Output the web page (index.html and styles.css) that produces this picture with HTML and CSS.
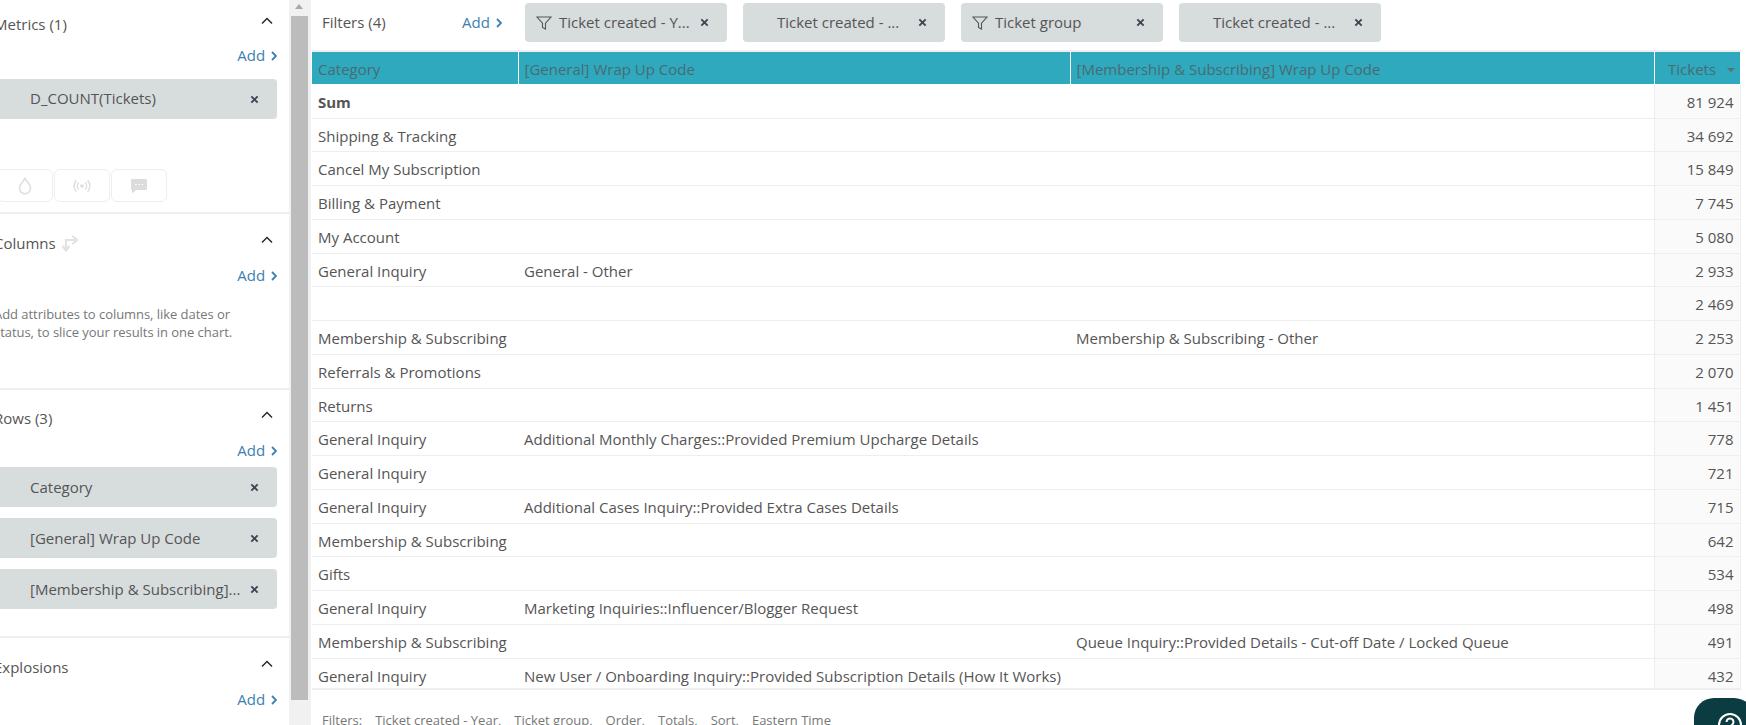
FILE: index.html
```html
<!DOCTYPE html>
<html lang="en">
<head>
    <meta charset="UTF-8">
    <title>Ticket report</title>
    <link rel="stylesheet" href="styles.css">
</head>
<body>
    <svg class="defs" width="0" height="0">
        <symbol id="x" viewBox="0 0 10 10"><path d="M1.5 1.5l7 7M8.5 1.5l-7 7" fill="none" stroke="currentColor" stroke-width="2.1"/></symbol>
        <symbol id="up" viewBox="0 0 12 8"><path d="M1 6.5L6 1.5l5 5" fill="none" stroke="currentColor" stroke-width="1.4"/></symbol>
        <symbol id="next" viewBox="0 0 6 10"><path d="M1 1l4 4-4 4" fill="none" stroke="currentColor" stroke-width="1.8"/></symbol>
        <symbol id="funnel" viewBox="0 0 16 16"><path d="M1 2h14l-5.5 6.2V14l-3-1.6V8.200z" fill="none" stroke="currentColor" stroke-width="1.1"/></symbol>
    </svg>

    <div class="sidebar">
        <div class="sidebar-inner">
            <section class="panel panel-metrics">
                <div class="panel-head"><span>Metrics (1)</span><svg class="chevron"><use href="#up"/></svg></div>
                <a class="add">Add <svg class="next"><use href="#next"/></svg></a>
                <div class="chip-list">
                    <div class="chip"><span class="chip-text">D_COUNT(Tickets)</span><svg class="close"><use href="#x"/></svg></div>
                </div>
                <div class="tool-row">
                    <div class="tool"></div>
                    <div class="tool">
                        <svg width="16" height="18" viewBox="0 0 16 18"><path d="M8 1.500C10 5 13.500 7.500 13.500 11.200A5.500 5.500 0 0 1 2.500 11.200C2.500 7.500 6 5 8 1.500z" fill="none" stroke="#e0e0e0" stroke-width="1.600"/></svg>
                    </div>
                    <div class="tool">
                        <svg width="18" height="14" viewBox="0 0 18 14" fill="none" stroke="#dcdcdc" stroke-width="1.300"><circle cx="9" cy="7" r="1.800" fill="#dcdcdc" stroke="none"/><path d="M5.800 3.500a5 5 0 0 0 0 7M12.200 3.500a5 5 0 0 1 0 7M3.400 1.200a8.500 8.500 0 0 0 0 11.600M14.600 1.200a8.500 8.500 0 0 1 0 11.600"/></svg>
                    </div>
                    <div class="tool">
                        <svg width="18" height="16" viewBox="0 0 18 16"><path d="M2 1h14a1 1 0 0 1 1 1v9a1 1 0 0 1-1 1H6l-4 3.500V12a1 1 0 0 1-1-1V2a1 1 0 0 1 1-1z" fill="#dcdcdc"/><path d="M5 6.500h1.500M8.300 6.500h1.500M11.600 6.500h1.500" stroke="#fff" stroke-width="1.200"/></svg>
                    </div>
                </div>
            </section>

            <section class="panel panel-columns">
                <div class="panel-head">
                    <span class="title-swap">Columns
                        <svg width="18" height="18" viewBox="0 0 18 18" fill="none" stroke="#e2e2e2" stroke-width="2.200"><path d="M5 15V6h10"/><path d="M11.500 2l4.500 4-4.500 4M1.500 12L5 16.500 8.500 12"/></svg>
                    </span>
                    <svg class="chevron"><use href="#up"/></svg>
                </div>
                <a class="add">Add <svg class="next"><use href="#next"/></svg></a>
                <p class="hint">Add attributes to columns, like dates or status, to slice your results in one chart.</p>
            </section>

            <section class="panel panel-rows">
                <div class="panel-head"><span>Rows (3)</span><svg class="chevron"><use href="#up"/></svg></div>
                <a class="add">Add <svg class="next"><use href="#next"/></svg></a>
                <div class="chip-list">
                    <div class="chip"><span class="chip-text">Category</span><svg class="close"><use href="#x"/></svg></div>
                    <div class="chip"><span class="chip-text">[General] Wrap Up Code</span><svg class="close"><use href="#x"/></svg></div>
                    <div class="chip"><span class="chip-text">[Membership &amp; Subscribing]...</span><svg class="close"><use href="#x"/></svg></div>
                </div>
            </section>

            <section class="panel panel-explosions">
                <div class="panel-head"><span>Explosions</span><svg class="chevron"><use href="#up"/></svg></div>
                <a class="add">Add <svg class="next"><use href="#next"/></svg></a>
            </section>
        </div>
    </div>

    <div class="scrollbar">
        <div class="scroll-arrow"></div>
        <div class="scroll-thumb"></div>
    </div>

    <div class="main">
        <div class="filter-bar">
            <div class="filter-label">Filters (4)</div>
            <a class="add filter-add">Add <svg class="next"><use href="#next"/></svg></a>
            <div class="filter-chip"><svg class="funnel"><use href="#funnel"/></svg><span class="filter-text">Ticket created - Y...</span><svg class="close"><use href="#x"/></svg></div>
            <div class="filter-chip"><span class="funnel"></span><span class="filter-text">Ticket created - ...</span><svg class="close"><use href="#x"/></svg></div>
            <div class="filter-chip"><svg class="funnel"><use href="#funnel"/></svg><span class="filter-text">Ticket group</span><svg class="close"><use href="#x"/></svg></div>
            <div class="filter-chip"><span class="funnel"></span><span class="filter-text">Ticket created - ...</span><svg class="close"><use href="#x"/></svg></div>
        </div>

        <div class="table-wrap">
            <table class="report">
                <colgroup><col class="col-cat"><col class="col-general"><col class="col-member"><col class="col-tickets"></colgroup>
                <thead>
                    <tr><th>Category</th><th>[General] Wrap Up Code</th><th>[Membership &amp; Subscribing] Wrap Up Code</th><th class="num">Tickets <span class="sort-caret"></span></th></tr>
                </thead>
                <tbody>
                    <tr class="sum"><td>Sum</td><td></td><td></td><td class="num">81 924</td></tr>
                    <tr><td>Shipping &amp; Tracking</td><td></td><td></td><td class="num">34 692</td></tr>
                    <tr><td>Cancel My Subscription</td><td></td><td></td><td class="num">15 849</td></tr>
                    <tr><td>Billing &amp; Payment</td><td></td><td></td><td class="num">7 745</td></tr>
                    <tr><td>My Account</td><td></td><td></td><td class="num">5 080</td></tr>
                    <tr><td>General Inquiry</td><td>General - Other</td><td></td><td class="num">2 933</td></tr>
                    <tr><td></td><td></td><td></td><td class="num">2 469</td></tr>
                    <tr><td>Membership &amp; Subscribing</td><td></td><td>Membership &amp; Subscribing - Other</td><td class="num">2 253</td></tr>
                    <tr><td>Referrals &amp; Promotions</td><td></td><td></td><td class="num">2 070</td></tr>
                    <tr><td>Returns</td><td></td><td></td><td class="num">1 451</td></tr>
                    <tr><td>General Inquiry</td><td>Additional Monthly Charges::Provided Premium Upcharge Details</td><td></td><td class="num">778</td></tr>
                    <tr><td>General Inquiry</td><td></td><td></td><td class="num">721</td></tr>
                    <tr><td>General Inquiry</td><td>Additional Cases Inquiry::Provided Extra Cases Details</td><td></td><td class="num">715</td></tr>
                    <tr><td>Membership &amp; Subscribing</td><td></td><td></td><td class="num">642</td></tr>
                    <tr><td>Gifts</td><td></td><td></td><td class="num">534</td></tr>
                    <tr><td>General Inquiry</td><td>Marketing Inquiries::Influencer/Blogger Request</td><td></td><td class="num">498</td></tr>
                    <tr><td>Membership &amp; Subscribing</td><td></td><td>Queue Inquiry::Provided Details - Cut-off Date / Locked Queue</td><td class="num">491</td></tr>
                    <tr><td>General Inquiry</td><td>New User / Onboarding Inquiry::Provided Subscription Details (How It Works)</td><td></td><td class="num">432</td></tr>
                </tbody>
            </table>
        </div>

        <div class="footnote">
            <span>Filters:</span><span>Ticket created - Year,</span><span>Ticket group,</span><span>Order,</span><span>Totals,</span><span>Sort,</span><span>Eastern Time</span>
        </div>
    </div>

    <div class="help">
        <svg width="26" height="26" viewBox="0 0 26 26" fill="none" stroke="#fff" stroke-width="2"><circle cx="13" cy="13" r="11"/><path d="M9.500 10a3.500 3.500 0 1 1 5.300 3c-1.200.7-1.800 1.400-1.800 2.800"/><circle cx="13" cy="19.500" r=".6"/></svg>
    </div>
</body>
</html>
```

FILE: styles.css
```css
* {
    box-sizing: border-box;
}

html, body {
    height: 100%;
}

body {
    margin: 0;
    display: flex;
    overflow: hidden;
    font-family: "Open Sans", sans-serif;
    font-size: 15px;
    color: #555;
    background-color: #fff;
}

.defs {
    position: absolute;
}

/* left panel, scrolled a little to the right so its edge is cut off */
.sidebar {
    width: 289px;
    flex-shrink: 0;
    overflow: hidden;
}

.sidebar-inner {
    width: 307px;
    margin-left: -18px;
}

.panel {
    padding: 0 12px 0 12px;
    border-bottom: 2px solid #eee;
}

.panel-metrics { height: 214px; padding-top: 13px; }
.panel-columns { height: 176px; padding-top: 18px; }
.panel-rows { height: 248px; padding-top: 17px; }
.panel-explosions { border-bottom: none; padding-top: 18px; }

.panel-head {
    display: flex;
    justify-content: space-between;
    height: 22px;
    line-height: 22px;
    padding-right: 4px;
}

.title-swap {
    display: flex;
    align-items: center;
    gap: 5px;
}

.chevron {
    width: 12px;
    height: 8px;
    margin-top: 4px;
    color: #222;
}

.add {
    display: block;
    margin-top: 10px;
    height: 22px;
    line-height: 22px;
    text-align: right;
    color: #3c7fb1;
}

.panel-metrics .add {
    margin-top: 9px;
}

.next {
    width: 6px;
    height: 10px;
    margin-left: 2px;
}

.chip-list {
    display: flex;
    flex-direction: column;
    gap: 11px;
    margin-top: 13px;
}

.chip {
    height: 40px;
    display: flex;
    align-items: center;
    justify-content: space-between;
    padding: 0 18px 0 36px;
    border-radius: 4px;
    background-color: #d7dcdd;
}

.chip-text {
    white-space: nowrap;
}

.panel-metrics .chip-text {
    padding-bottom: 2px;
}

.close {
    width: 9px;
    height: 9px;
    flex-shrink: 0;
    color: #3f4653;
}

.tool-row {
    display: flex;
    gap: 1px;
    margin: 50px 0 0 -54px;
}

.tool {
    width: 56px;
    height: 33px;
    display: flex;
    align-items: center;
    justify-content: center;
    border: 1px solid #eee;
    border-radius: 6px;
}

.hint {
    margin: 19px 0 0;
    font-size: 13px;
    line-height: 18px;
    letter-spacing: -0.05px;
    color: #777;
}

.panel-columns .hint {
    width: 250px;
}

.panel-rows .chip-list {
    margin-top: 6px;
}

/* native looking scrollbar */
.scrollbar {
    width: 22px;
    flex-shrink: 0;
    padding: 0 3px 0 2px;
    background-color: #f1f1f1;
}

.scroll-arrow {
    height: 16px;
    position: relative;
}

.scroll-arrow::after {
    content: "";
    position: absolute;
    left: 4px;
    top: 4px;
    border-left: 4.500px solid transparent;
    border-right: 4.500px solid transparent;
    border-bottom: 5px solid #a8a8a8;
}

.scroll-thumb {
    height: 684px;
    background-color: #bcbcbc;
}

.main {
    flex: 1;
    min-width: 0;
    padding-left: 1px;
}

.filter-bar {
    height: 50px;
    padding-top: 3px;
    display: flex;
    align-items: flex-start;
}

.filter-label {
    width: 140px;
    padding-left: 10px;
    line-height: 39px;
}

.filter-add {
    width: 63px;
    height: 39px;
    margin: 0 0 0 10px;
    line-height: 39px;
    text-align: left;
}

.filter-chip {
    width: 202px;
    height: 39px;
    margin-right: 16px;
    display: flex;
    align-items: center;
    padding: 0 18px 0 11px;
    border-radius: 4px;
    background-color: #d7dcdd;
}

.filter-text {
    flex: 1;
    white-space: nowrap;
    padding-bottom: 2px;
}

.funnel {
    width: 16px;
    height: 16px;
    margin-right: 7px;
    flex-shrink: 0;
    color: #555;
}

.table-wrap {
    width: 1429px;
    height: 640px;
    overflow: hidden;
    border-top: 2px solid #eee;
    border-bottom: 2px solid #eee;
}

.report {
    width: 1428px;
    table-layout: fixed;
    border-collapse: collapse;
}

.col-cat { width: 206px; }
.col-general { width: 552px; }
.col-member { width: 584px; }
.col-tickets { width: 86px; }

.report th {
    height: 32px;
    padding: 1px 6px 0;
    font-weight: 400;
    text-align: left;
    color: #4a6b73;
    background-color: #2fa9bd;
    border-left: 1px solid #fff;
}

.report th:first-child {
    border-left: none;
}

.report td {
    height: 33.750px;
    padding: 1.500px 6px 0;
    white-space: nowrap;
    border-bottom: 1px solid #eee;
}

.report .num {
    text-align: right;
}

.report td.num {
    background-color: #fafafa;
    border-left: 1px solid #eee;
    border-right: 1px solid #eee;
}

.report th.num {
    padding-right: 5px;
}

.sort-caret {
    display: inline-block;
    margin: 0 0 3px 7px;
    border-left: 4px solid transparent;
    border-right: 4px solid transparent;
    border-top: 4px solid #5a6f75;
}

.sum td {
    height: 34px;
}

.sum td:first-child {
    font-weight: 700;
}

.footnote {
    display: flex;
    gap: 13px;
    padding: 22px 0 0 10px;
    font-size: 13px;
    line-height: 16px;
    color: #777;
}

.help {
    position: absolute;
    left: 1694px;
    top: 698px;
    width: 60px;
    height: 60px;
    padding: 14px 0 0 23px;
    border-radius: 20px;
    background-color: #0b3c42;
}
```
